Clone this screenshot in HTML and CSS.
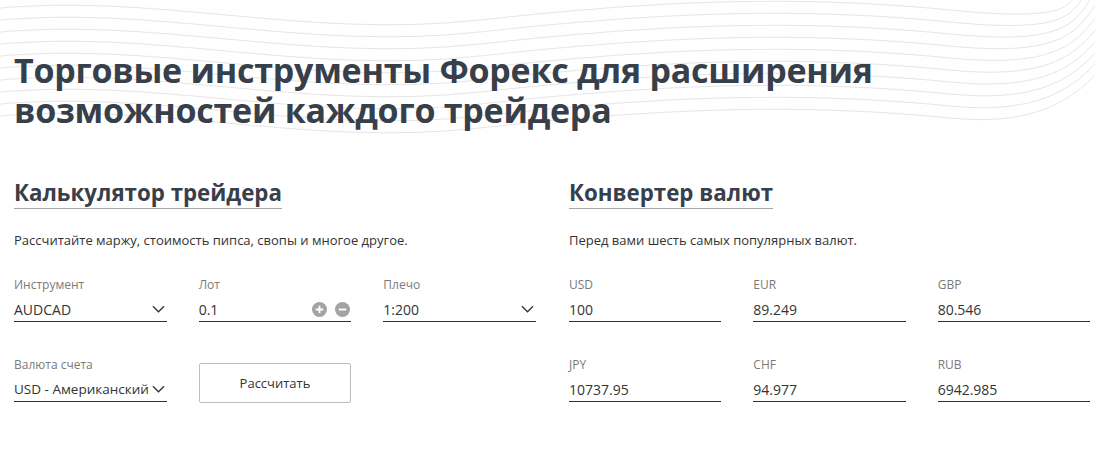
FILE: index.html
```html
<!DOCTYPE html>
<html lang="ru">
<head>
  <meta charset="UTF-8">
  <meta name="viewport" content="width=device-width, initial-scale=1.0">
  <title>Торговые инструменты Форекс</title>
  <link rel="stylesheet" href="styles.css">
</head>
<body>
<div class="page">
    <svg class="waves" viewBox="0 0 1095 140" preserveAspectRatio="none">
        <g fill="none" stroke="#e6e6e6" stroke-width="1">
            <path d="M-20 10 C 150 -10, 300 40, 480 20 S 800 -5, 950 10 S 1060 -5, 1090 -20"/>
            <path d="M-20 22 C 150 2, 300 52, 480 32 S 800 7, 950 22 S 1065 0, 1100 -20"/>
            <path d="M-20 34 C 150 14, 300 64, 480 44 S 800 19, 950 34 S 1070 5, 1110 -20"/>
            <path d="M-20 46 C 150 26, 300 76, 480 56 S 800 31, 950 46 S 1075 10, 1120 -20"/>
            <path d="M-20 58 C 150 38, 300 88, 480 68 S 800 43, 950 58 S 1080 15, 1130 -20"/>
            <path d="M-20 70 C 150 50, 300 100, 480 80 S 800 55, 950 70 S 1085 20, 1140 -20"/>
            <path d="M-20 82 C 150 62, 300 112, 480 92 S 800 67, 950 82 S 1090 25, 1150 -20"/>
            <path d="M-20 94 C 150 74, 300 124, 480 104 S 800 79, 950 94 S 1095 30, 1160 -20"/>
            <path d="M-20 106 C 150 86, 300 136, 480 116 S 800 91, 950 106 S 1100 35, 1170 -20"/>
            <path d="M-20 118 C 150 98, 300 148, 480 128 S 800 103, 950 118 S 1105 40, 1180 -20"/>
        </g>
    </svg>

    <h1 class="title">Торговые инструменты Форекс для расширения<br>возможностей каждого трейдера</h1>

    <div class="tools">
        <div class="tool">
            <h2 class="tool-head"><span>Калькулятор трейдера</span></h2>
            <p class="tool-desc">Рассчитайте маржу, стоимость пипса, свопы и многое другое.</p>
            <div class="fields">
                <div class="field">
                    <div class="label">Инструмент</div>
                    <div class="value">AUDCAD
                        <svg class="chev" viewBox="0 0 14 8"><path d="M1 1 L7 7 L13 1" fill="none" stroke="#333" stroke-width="1.4"/></svg>
                    </div>
                </div>
                <div class="field">
                    <div class="label">Лот</div>
                    <div class="value">0.1
                        <span class="steps">
                            <svg class="step" viewBox="0 0 16 16"><circle cx="8" cy="8" r="8" fill="#a3a3a3"/><path d="M8 4 V12 M4 8 H12" stroke="#fff" stroke-width="2"/></svg>
                            <svg class="step" viewBox="0 0 16 16"><circle cx="8" cy="8" r="8" fill="#a3a3a3"/><path d="M4 8 H12" stroke="#fff" stroke-width="2"/></svg>
                        </span>
                    </div>
                </div>
                <div class="field">
                    <div class="label">Плечо</div>
                    <div class="value">1:200
                        <svg class="chev" viewBox="0 0 14 8"><path d="M1 1 L7 7 L13 1" fill="none" stroke="#333" stroke-width="1.4"/></svg>
                    </div>
                </div>
                <div class="field">
                    <div class="label">Валюта счета</div>
                    <div class="value value-long">USD - Американский
                        <svg class="chev" viewBox="0 0 14 8"><path d="M1 1 L7 7 L13 1" fill="none" stroke="#333" stroke-width="1.4"/></svg>
                    </div>
                </div>
                <div class="field">
                    <button class="btn">Рассчитать</button>
                </div>
            </div>
        </div>

        <div class="tool">
            <h2 class="tool-head"><span>Конвертер валют</span></h2>
            <p class="tool-desc">Перед вами шесть самых популярных валют.</p>
            <div class="fields">
                <div class="field"><div class="label">USD</div><div class="value">100</div></div>
                <div class="field"><div class="label">EUR</div><div class="value">89.249</div></div>
                <div class="field"><div class="label">GBP</div><div class="value">80.546</div></div>
                <div class="field"><div class="label">JPY</div><div class="value">10737.95</div></div>
                <div class="field"><div class="label">CHF</div><div class="value">94.977</div></div>
                <div class="field"><div class="label">RUB</div><div class="value">6942.985</div></div>
            </div>
        </div>
    </div>
</div>
</body>
</html>
```
FILE: styles.css
```css
body {
    font-family: "Open Sans", Arial, sans-serif;
    background-color: #fff;
    color: #333;
    margin: 0;
}
.page {
    position: relative;
    padding: 50px 5px 0 14px;
    overflow: hidden;
}
.waves {
    position: absolute;
    top: 0;
    left: 0;
    width: 100%;
    height: 140px;
    z-index: 0;
}
.title {
    position: relative;
    margin: 0;
    font-size: 34px;
    line-height: 40px;
    letter-spacing: -0.25px;
    font-weight: bold;
    color: #37404a;
}
.tools {
    display: grid;
    grid-template-columns: 522px 521px;
    column-gap: 33px;
    margin-top: 47px;
}
.tool-head {
    margin: 0;
    font-size: 22.3px;
    line-height: 32px;
    font-weight: bold;
    color: #37404a;
}
.tool-head span {
    display: inline-block;
    border-bottom: 1px solid #a4a8ad;
    line-height: 30px;
}
.tool-desc {
    margin: 22px 0 0;
    font-size: 13px;
    line-height: 18px;
    color: #333;
}
.fields {
    display: grid;
    grid-template-columns: repeat(3, 1fr);
    column-gap: 32px;
    row-gap: 35px;
    margin-top: 28px;
}
.label {
    font-size: 12px;
    line-height: 16px;
    color: #7a7a7a;
}
.value {
    display: flex;
    align-items: center;
    justify-content: space-between;
    margin-top: 4px;
    height: 24px;
    border-bottom: 1px solid #333;
    font-size: 14px;
    color: #333;
    white-space: nowrap;
}
.value-long {
    font-size: 13.5px;
}
.chev {
    flex: none;
    width: 13px;
    height: 8px;
    margin-right: 2px;
}
.steps {
    display: flex;
    gap: 8px;
    margin-right: 1px;
}
.step {
    width: 15px;
    height: 15px;
}
.btn {
    width: 100%;
    height: 40px;
    margin-top: 6px;
    background: #fff;
    border: 1px solid #bdbdbd;
    border-radius: 2px;
    font-family: inherit;
    font-size: 13px;
    color: #333;
}
```
